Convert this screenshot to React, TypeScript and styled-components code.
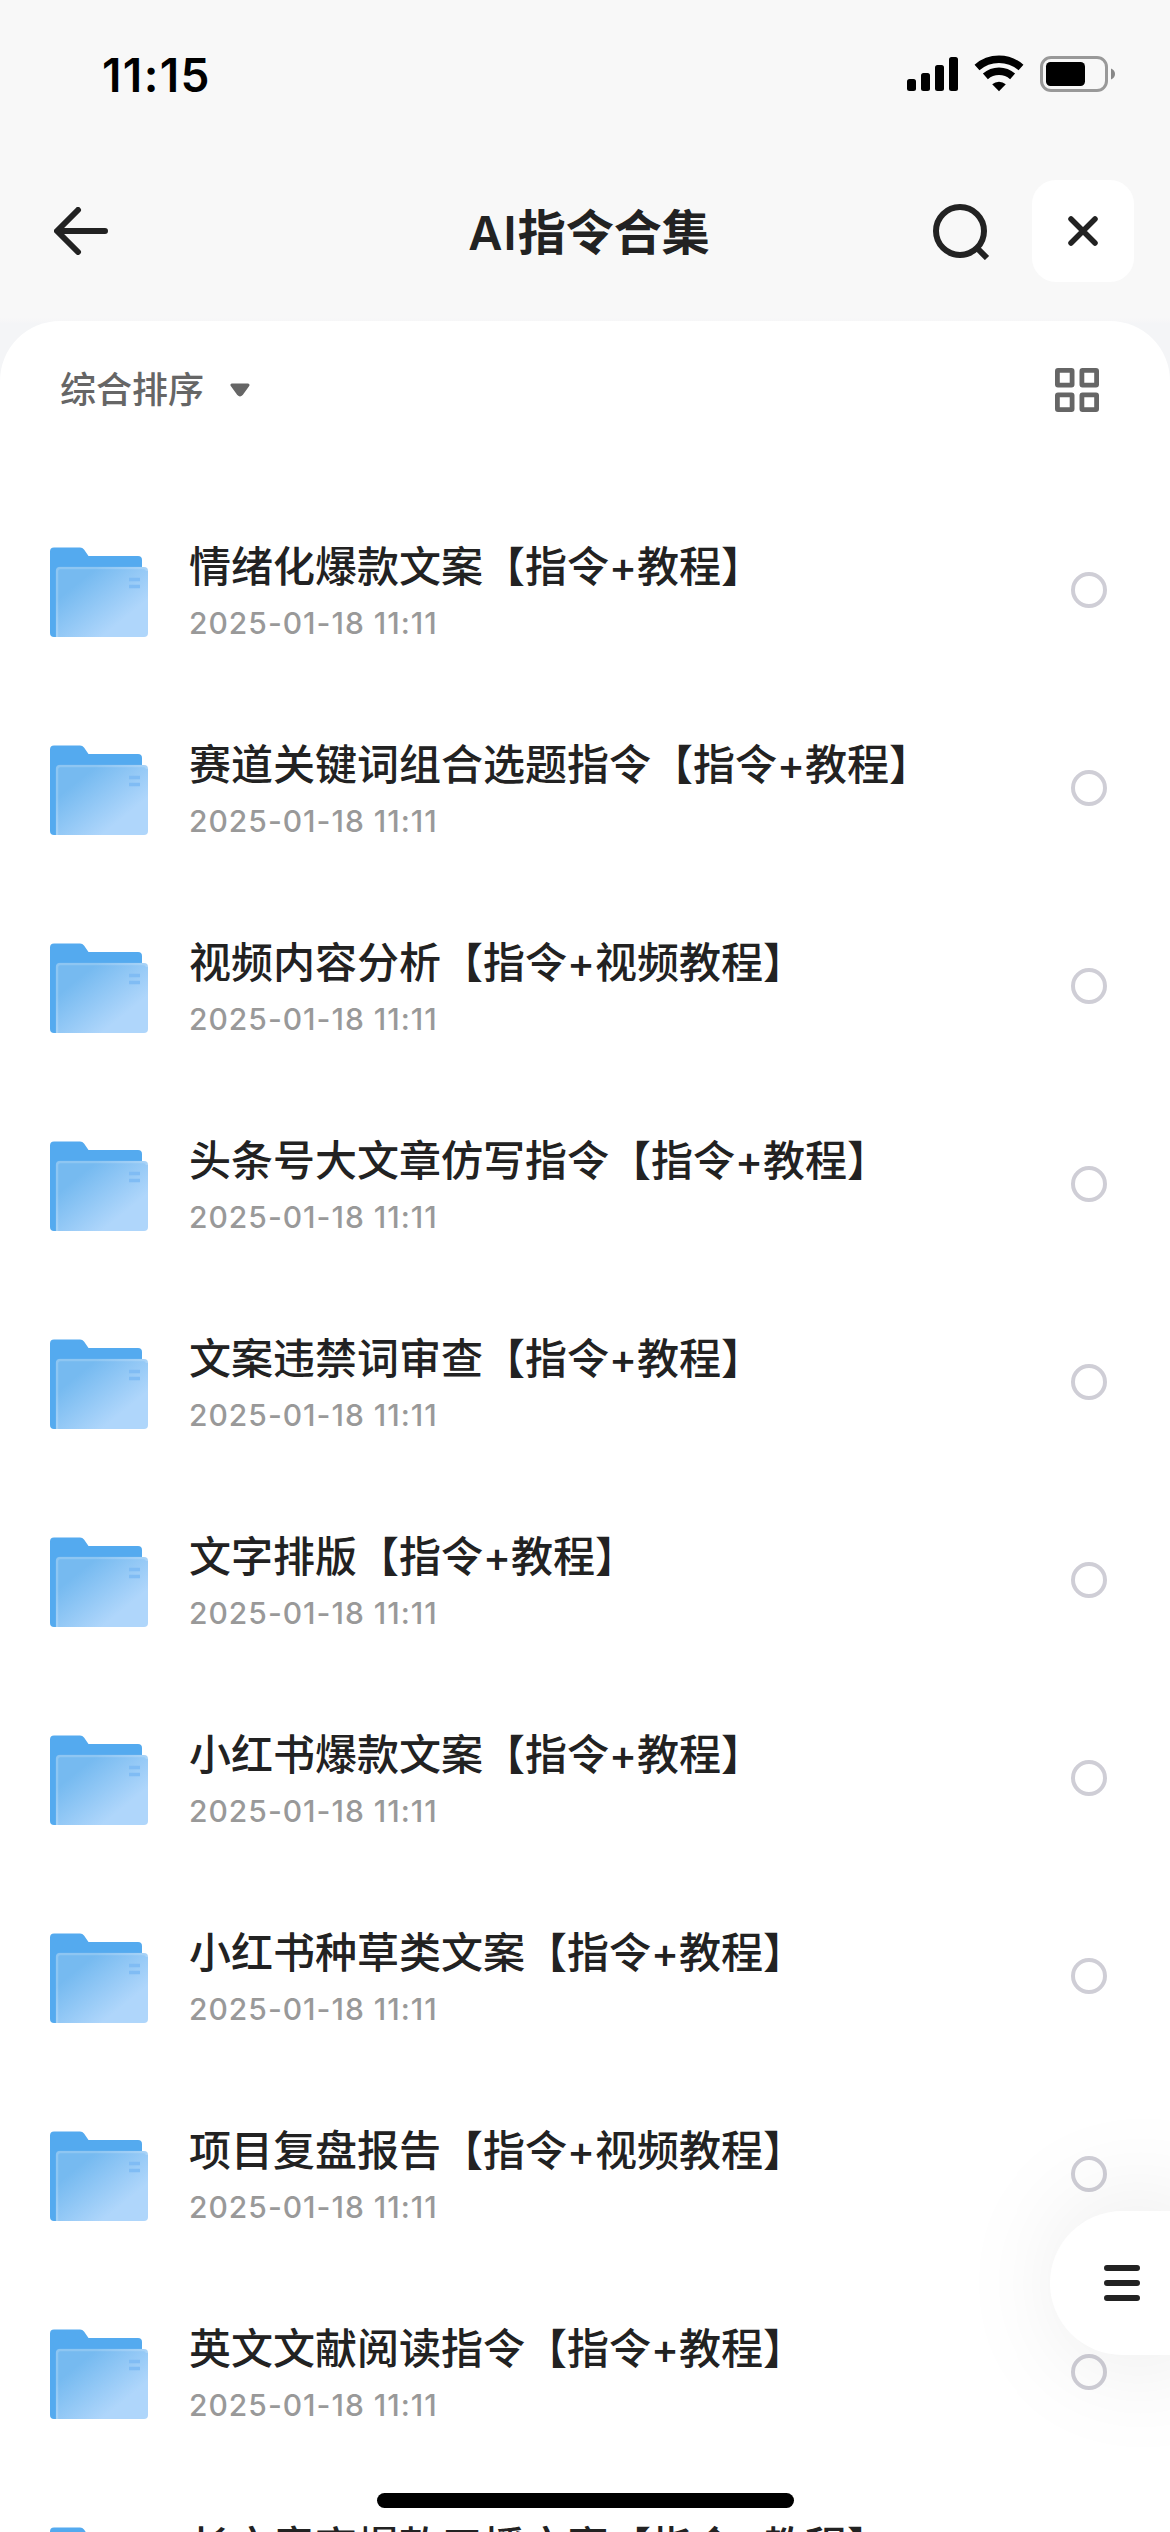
import React from "react";
import styled, { createGlobalStyle } from "styled-components";

const GlobalStyle = createGlobalStyle`
  * { box-sizing: border-box; }
  html, body { margin: 0; padding: 0; background: #fff; }
  body { overflow: hidden; }
`;

const latin = `Inter, "Noto Sans CJK SC", sans-serif`;

const Screen = styled.div`
  position: relative;
  display: flex;
  flex-direction: column;
  width: 1170px;
  height: 2532px;
  overflow: hidden;
  background: linear-gradient(#f8f8f8 0, #f8f8f8 318px, #f4f5f7 324px);
  font-family: ${latin};
  color: #222;
`;

const StatusBar = styled.header`
  display: flex;
  justify-content: space-between;
  align-items: center;
  flex: none;
  height: 148px;
  padding: 0 52px 0 102px;
`;

const Time = styled.time`
  font-size: 46px;
  font-weight: 600;
  line-height: 56px;
  letter-spacing: 1.4px;
  padding-top: 1px;
  color: #000;
`;

const StatusIcons = styled.div`
  display: flex;
  align-items: center;
`;

const NavBar = styled.nav`
  display: grid;
  grid-template-columns: 262px 1fr 262px;
  align-items: center;
  flex: none;
  height: 173px;
  padding-bottom: 7px;
`;

const BackButton = styled.button`
  display: flex;
  width: 54px;
  margin-left: 54px;
  padding: 0;
  border: 0;
  background: none;
`;

const Title = styled.h1`
  margin: 0 0 0 8px;
  padding-top: 3px;
  text-align: center;
  white-space: nowrap;
  font-size: 48px;
  line-height: 60px;
  font-weight: 600;
`;

const TitleLatin = styled.span`
  font-size: 47px;
  letter-spacing: 1.2px;
`;

const NavActions = styled.div`
  display: flex;
  align-items: center;
  justify-content: flex-end;
  gap: 42px;
  padding-right: 36px;
`;

const CloseButton = styled.button`
  display: grid;
  place-items: center;
  width: 102px;
  height: 102px;
  padding: 0;
  border: 0;
  border-radius: 24px;
  background: #fff;
`;

const Sheet = styled.main`
  flex: 1;
  min-height: 0;
  overflow: hidden;
  background: #fff;
  border-radius: 60px 60px 0 0;
`;

const Toolbar = styled.div`
  display: flex;
  align-items: center;
  justify-content: space-between;
  height: 138px;
  padding: 0 71px 0 60px;
`;

const SortButton = styled.button`
  display: flex;
  align-items: center;
  gap: 26px;
  padding: 0;
  border: 0;
  background: none;
  color: #666;
  font: 500 36px/48px ${latin};
`;

const FileList = styled.ul`
  margin: 32px 0 0;
  padding: 0;
  list-style: none;
`;

const FileRow = styled.li`
  display: flex;
  align-items: center;
  height: 198px;
  padding: 0 63px 0 50px;
`;

const FileInfo = styled.div`
  flex: 1;
  padding-left: 41px;
`;

const FileName = styled.div`
  font-size: 42px;
  line-height: 58px;
  font-weight: 500;
  white-space: nowrap;
`;

const FileDate = styled.div`
  font-size: 30px;
  line-height: 40px;
  margin-top: 7px;
  font-weight: 450;
  letter-spacing: 1px;
  color: #999;
`;

const Radio = styled.span`
  width: 36px;
  height: 36px;
  border: 4px solid #cfced6;
  border-radius: 50%;
`;

const FloatingMenu = styled.button`
  position: absolute;
  top: 2211px;
  right: 0;
  display: flex;
  align-items: center;
  width: 120px;
  height: 144px;
  padding: 0 0 0 54px;
  border: 0;
  border-radius: 72px 0 0 72px;
  background: #fff;
  box-shadow: 20px 0 120px rgba(0, 0, 0, 0.12);
`;

const HomeIndicator = styled.div`
  position: absolute;
  left: 377px;
  top: 2493px;
  width: 417px;
  height: 15px;
  border-radius: 8px;
  background: #000;
`;

const SystemIcons = () => (
  <svg width="211" height="40" viewBox="0 0 211 40">
    <rect x="0" y="25" width="9" height="12" rx="2.5" />
    <rect x="14" y="19" width="9" height="18" rx="2.5" />
    <rect x="28" y="11" width="9" height="26" rx="2.5" />
    <rect x="42" y="3" width="9" height="34" rx="2.5" />
    <g fill="none" stroke="#000">
      <path d="M70 13.5A33.5 33.5 0 0 1 114 13.5" strokeWidth="7.5" />
      <path d="M78.4 22.4A20.5 20.5 0 0 1 105.6 22.4" strokeWidth="7.5" />
    </g>
    <path d="M85.2 30.2a10.5 10.5 0 0 1 13.6 0L92 37.2Z" />
    <rect x="134.500" y="3.500" width="65" height="33" rx="9.500" fill="none" stroke="#999" strokeWidth="3" />
    <rect x="139" y="8" width="39" height="24" rx="4.500" />
    <path d="M204 14.500q4 1.600 4 5.500t-4 5.500Z" fill="#888" />
  </svg>
);

const BackIcon = () => (
  <svg width="54" height="48" viewBox="0 0 54 48" fill="none" stroke="#222" strokeWidth="6" strokeLinecap="round" strokeLinejoin="round">
    <path d="M51 24H4M24 3L3 24l21 21" />
  </svg>
);

const SearchIcon = () => (
  <svg width="57" height="57" viewBox="0 0 57 57" fill="none" stroke="#222" strokeWidth="6">
    <circle cx="27" cy="28" r="24" />
    <path d="M44 45l10 10" />
  </svg>
);

const CloseIcon = () => (
  <svg width="30" height="30" viewBox="0 0 30 30" fill="none" stroke="#222" strokeWidth="5.500" strokeLinecap="round">
    <path d="M3 3l24 24M27 3L3 27" />
  </svg>
);

const CaretIcon = () => (
  <svg width="20" height="14" viewBox="0 0 20 14">
    <path d="M2 2h16l-6.500 9q-1.500 1.800-3 0Z" fill="#666" stroke="#666" strokeWidth="3" strokeLinejoin="round" />
  </svg>
);

const GridIcon = () => (
  <svg width="44" height="44" viewBox="0 0 44 44" fill="none" stroke="#666" strokeWidth="4.800">
    <rect x="2.400" y="2.400" width="14.700" height="14.700" rx="0.600" />
    <rect x="26.900" y="2.400" width="14.700" height="14.700" rx="0.600" />
    <rect x="2.400" y="26.900" width="14.700" height="14.700" rx="0.600" />
    <rect x="26.900" y="26.900" width="14.700" height="14.700" rx="0.600" />
  </svg>
);

const FolderGraphic = styled.svg`
  flex: none;
  margin-top: 3px;
`;

const FolderIcon = () => (
  <FolderGraphic width="98" height="90" viewBox="0 0 98 90">
    <defs>
      <linearGradient id="front" x1="0.100" y1="0.150" x2="0.850" y2="0.850">
        <stop offset="0.150" stopColor="#76baf0" />
        <stop offset="0.850" stopColor="#afd6fb" />
      </linearGradient>
    </defs>
    <path d="M0 4.500Q0 .5 4 .5H30q2.600 0 4 2L38.500 9H88q4 0 4 4V60L8 90H4q-4 0-4-4Z" fill="#54aaef" />
    <path d="M6 24q0-4 4-4H94q4 0 4 4V86q0 4-4 4H6Z" fill="url(#front)" />
    <path d="M7 90V24q0-3 3-3H94q3 0 3 3" fill="none" stroke="#fff" strokeOpacity="0.180" strokeWidth="2.500" />
    <path d="M79 32.500h11M79 39.500h11" stroke="#80bcf4" strokeWidth="3.400" />
  </FolderGraphic>
);

const MenuIcon = () => (
  <svg width="36" height="36" viewBox="0 0 36 36" stroke="#222" strokeWidth="6" strokeLinecap="round">
    <path d="M3 3h30M3 18h30M3 33h30" />
  </svg>
);

const files = [
  "情绪化爆款文案【指令+教程】",
  "赛道关键词组合选题指令【指令+教程】",
  "视频内容分析【指令+视频教程】",
  "头条号大文章仿写指令【指令+教程】",
  "文案违禁词审查【指令+教程】",
  "文字排版【指令+教程】",
  "小红书爆款文案【指令+教程】",
  "小红书种草类文案【指令+教程】",
  "项目复盘报告【指令+视频教程】",
  "英文文献阅读指令【指令+教程】",
  "长文章高爆款口播文案【指令+教程】",
];

export default function App() {
  return (
    <Screen>
      <GlobalStyle />
      <StatusBar>
        <Time>11:15</Time>
        <StatusIcons>
          <SystemIcons />
        </StatusIcons>
      </StatusBar>
      <NavBar>
        <BackButton aria-label="返回">
          <BackIcon />
        </BackButton>
        <Title>
          <TitleLatin>AI</TitleLatin>指令合集
        </Title>
        <NavActions>
          <SearchIcon />
          <CloseButton aria-label="关闭">
            <CloseIcon />
          </CloseButton>
        </NavActions>
      </NavBar>
      <Sheet>
        <Toolbar>
          <SortButton>
            综合排序
            <CaretIcon />
          </SortButton>
          <GridIcon />
        </Toolbar>
        <FileList>
          {files.map((name) => (
            <FileRow key={name}>
              <FolderIcon />
              <FileInfo>
                <FileName>{name}</FileName>
                <FileDate>2025-01-18 11:11</FileDate>
              </FileInfo>
              <Radio />
            </FileRow>
          ))}
        </FileList>
      </Sheet>
      <FloatingMenu aria-label="菜单">
        <MenuIcon />
      </FloatingMenu>
      <HomeIndicator />
    </Screen>
  );
}
